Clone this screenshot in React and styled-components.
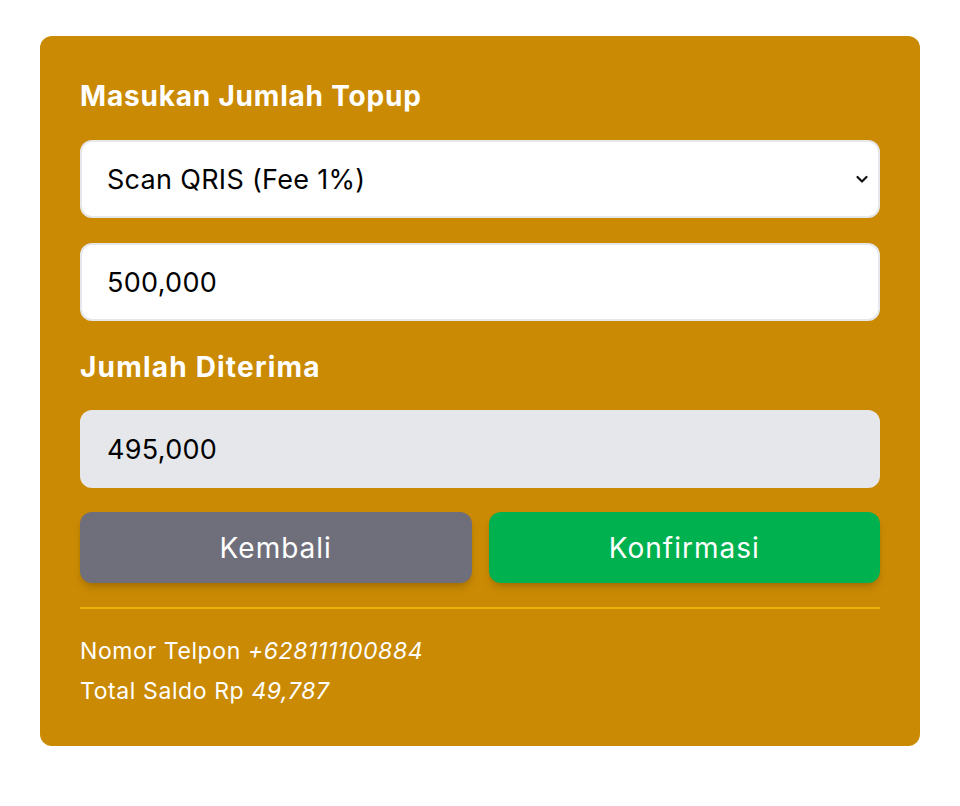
import styled, { createGlobalStyle } from "styled-components";
import { useState } from "react";

const GlobalStyle = createGlobalStyle`
  * { box-sizing: border-box; }
  body {
    margin: 0;
    background: #ffffff;
    font-family: "Inter", "Liberation Sans", sans-serif;
  }
`;

const Page = styled.div`
  padding: 36px 40px 60px;
`;

const Card = styled.div`
  background-color: #ca8a04;
  border-radius: 12px;
  padding: 40px 40px 35px;
  display: flex;
  flex-direction: column;
`;

const Title = styled.h2`
  margin: 0;
  color: #ffffff;
  font-size: 28px;
  line-height: 40px;
  font-weight: 700;
  letter-spacing: ${(p) => p.$spacing || 0.8}px;
`;

const SelectWrap = styled.div`
  position: relative;
  margin-top: 24px;
`;

const Select = styled.select`
  appearance: none;
  width: 100%;
  height: 78px;
  padding: 0 60px 0 25px;
  border: 2px solid #e5e7eb;
  border-radius: 12px;
  background: #ffffff;
  color: #000000;
  font-family: inherit;
  font-size: 27px;
  letter-spacing: 0.3px;
  outline: none;
`;

const Chevron = styled.svg`
  position: absolute;
  right: 10px;
  top: 50%;
  width: 16px;
  height: 16px;
  transform: translateY(-50%);
  pointer-events: none;
`;

const Input = styled.input`
  width: 100%;
  height: 78px;
  margin-top: ${(p) => p.$gap || 0}px;
  padding: 0 25px;
  border: 2px solid #e5e7eb;
  border-radius: 12px;
  background: ${(p) => (p.readOnly ? "#e5e7eb" : "#ffffff")};
  color: #000000;
  font-family: inherit;
  font-size: 27px;
  letter-spacing: 0.3px;
  outline: none;
`;

const Label = styled(Title)`
  margin-top: 26px;
`;

const Buttons = styled.div`
  display: grid;
  grid-template-columns: 1fr 1fr;
  gap: 17px;
  margin-top: 24px;
`;

const Button = styled.button`
  height: 71px;
  border: none;
  border-radius: 12px;
  background-color: ${(p) => (p.$primary ? "#00b14f" : "#6f6f7b")};
  color: #ffffff;
  font-family: inherit;
  font-size: 28px;
  letter-spacing: 1px;
  cursor: pointer;
  box-shadow: 0 6px 10px -2px rgba(0, 0, 0, 0.15), 0 3px 5px -2px rgba(0, 0, 0, 0.1);
`;

const Divider = styled.hr`
  margin: 24px 0 0;
  border: none;
  border-top: 2px solid #eab308;
`;

const Info = styled.div`
  margin-top: 22px;
  color: #ffffff;
  font-size: 23px;
  line-height: 40px;
  letter-spacing: 0.6px;
`;

const Val = styled.em`
  font-style: italic;
`;

export default function App() {
  const [method, setMethod] = useState("qris");
  const [amount, setAmount] = useState("500,000");

  return (
    <Page>
      <GlobalStyle />
      <Card>
        <Title>Masukan Jumlah Topup</Title>
        <SelectWrap>
          <Select value={method} onChange={(e) => setMethod(e.target.value)}>
            <option value="qris">Scan QRIS (Fee 1%)</option>
            <option value="va">Virtual Account</option>
          </Select>
          <Chevron viewBox="0 0 16 16" fill="none" stroke="#111" strokeWidth="2.2" strokeLinecap="round" strokeLinejoin="round">
            <path d="M3.5 6l4.5 4.5L12.5 6" />
          </Chevron>
        </SelectWrap>
        <Input $gap={25} value={amount} onChange={(e) => setAmount(e.target.value)} />
        <Label as="div" $spacing={1.2}>Jumlah Diterima</Label>
        <Input $gap={23} readOnly value="495,000" />
        <Buttons>
          <Button>Kembali</Button>
          <Button $primary>Konfirmasi</Button>
        </Buttons>
        <Divider />
        <Info>
          <div>Nomor Telpon <Val>+628111100884</Val></div>
          <div>Total Saldo Rp <Val>49,787</Val></div>
        </Info>
      </Card>
    </Page>
  );
}
